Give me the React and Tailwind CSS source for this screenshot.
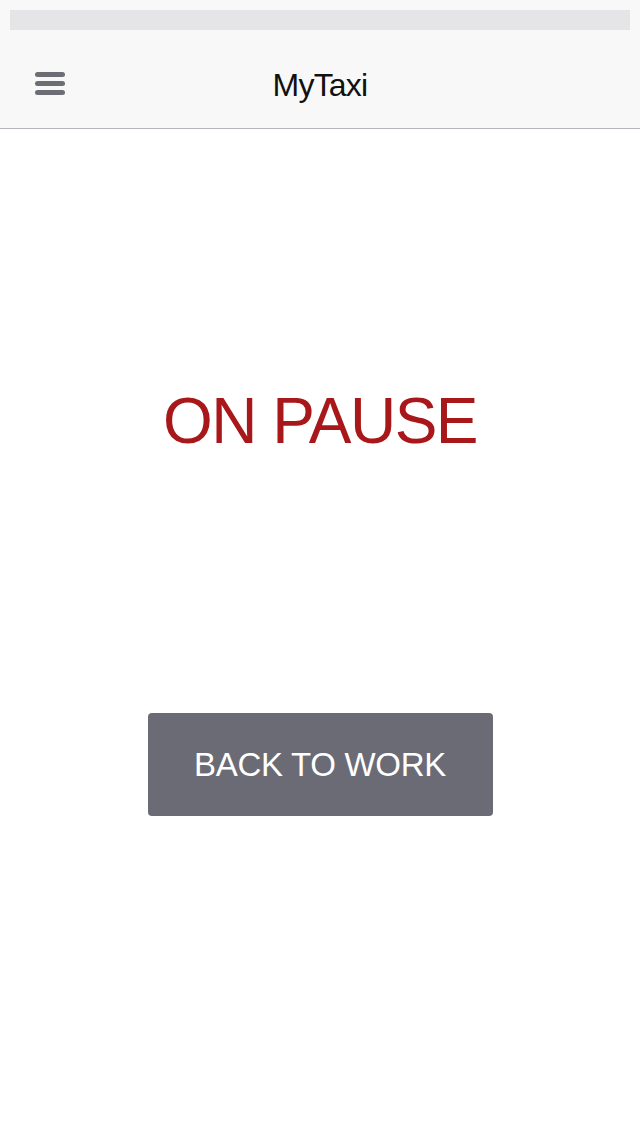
import React from 'react';

const MenuIcon = () => (
  <div className="flex flex-col gap-[4px] w-[30px]">
    <span className="block h-[5px] rounded-full bg-[#6d6d75]"></span>
    <span className="block h-[5px] rounded-full bg-[#6d6d75]"></span>
    <span className="block h-[5px] rounded-full bg-[#6d6d75]"></span>
  </div>
);

export default function App() {
  return (
    <div className="min-h-[1136px] bg-white font-['Liberation_Sans',Arial,sans-serif]">
      {/* Header */}
      <header className="bg-[#f8f8f8] border-b border-[#b4b4ba] pt-[10px]">
        <div className="mx-[10px] h-[20px] bg-[#e5e5e7]"></div>
        <div className="grid grid-cols-[1fr_auto_1fr] h-[98px] px-[35px]">
          <div className="pt-[42px]">
            <MenuIcon />
          </div>
          <h1 className="pt-[39px] text-[32px] leading-none tracking-[-0.8px] text-[#111]">MyTaxi</h1>
          <div></div>
        </div>
      </header>

      {/* Content */}
      <main className="flex flex-col items-center">
        <p className="mt-[260px] text-[64px] leading-none tracking-[-1.5px] text-[#a8181a]">ON PAUSE</p>
        <button className="mt-[260px] w-[345px] h-[103px] rounded-[4px] bg-[#6b6b75] text-white text-[33px] leading-none tracking-[-0.3px]">
          BACK TO WORK
        </button>
      </main>
    </div>
  );
}
